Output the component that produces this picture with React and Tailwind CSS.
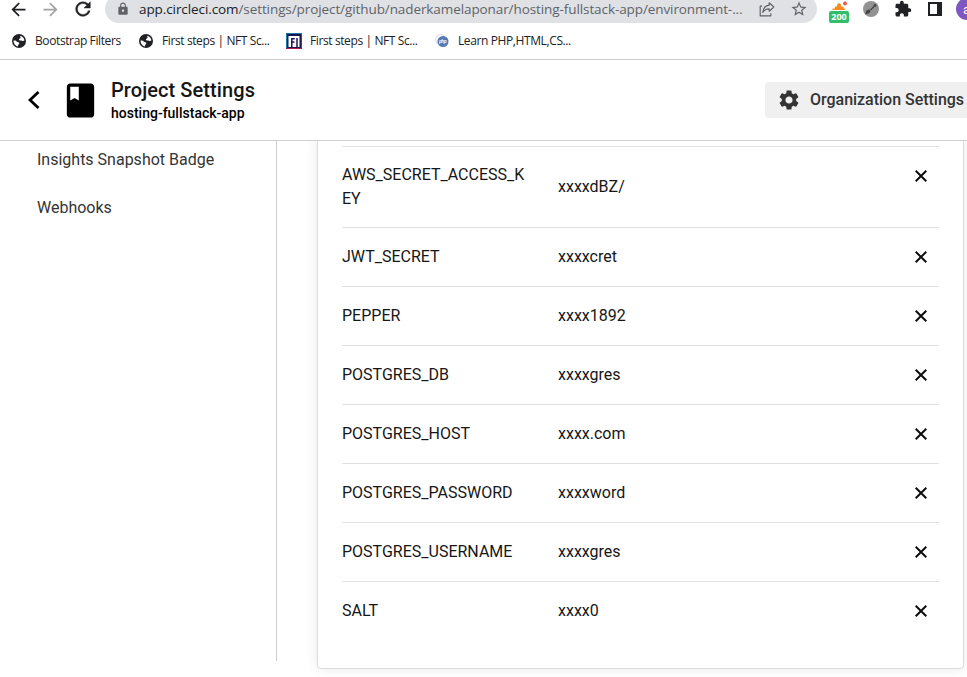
import {
  MdArrowBack,
  MdArrowForward,
  MdLock,
  MdStarBorder,
  MdExtension,
  MdClass,
  MdSettings,
} from "react-icons/md";

const variables = [
  { name: "JWT_SECRET", value: "xxxxcret" },
  { name: "PEPPER", value: "xxxx1892" },
  { name: "POSTGRES_DB", value: "xxxxgres" },
  { name: "POSTGRES_HOST", value: "xxxx.com" },
  { name: "POSTGRES_PASSWORD", value: "xxxxword" },
  { name: "POSTGRES_USERNAME", value: "xxxxgres" },
  { name: "SALT", value: "xxxx0" },
];

function CloseIcon() {
  return (
    <svg width="12" height="12" viewBox="0 0 12 12" stroke="#0d0d0d" strokeWidth="2" fill="none">
      <path d="M0.7 0.7 11.3 11.3M11.3 0.7 0.7 11.3" />
    </svg>
  );
}

function RefreshIcon() {
  return (
    <svg className="shrink-0" width="22" height="22" viewBox="0 0 24 24" fill="#202124" stroke="#202124" strokeWidth="0.4">
      <path d="M17.650 6.350A7.958 7.958 0 0 0 12 4c-4.420 0-7.990 3.580-7.990 8s3.570 8 7.990 8c3.730 0 6.840-2.550 7.730-6h-2.080A5.990 5.990 0 0 1 12 18c-3.310 0-6-2.690-6-6s2.690-6 6-6c1.660 0 3.140.690 4.220 1.780L13 11h7V4l-2.350 2.350z" />
    </svg>
  );
}

function ShareIcon() {
  return (
    <svg width="16" height="16" viewBox="0 0 16 16" fill="none" stroke="#5f6368" strokeWidth="1.2" strokeLinejoin="round">
      <path d="M3.2 5.2H1.2v9.600h10.600v-2.500" />
      <path d="M10.200 1.800 14.800 6 10.200 10.200V7.900C7.200 7.900 5.200 9 3.800 11.400 4.200 7.600 6.200 4.700 10.200 4.200Z" />
    </svg>
  );
}

function GlobeIcon() {
  return (
    <svg className="ml-[2px] mr-[2px] shrink-0" width="14" height="14" viewBox="0 0 14 14">
      <circle cx="7" cy="7" r="7" fill="#202124" />
      <path d="M1.500 6.700C2.800 6.300 4.300 6.900 5 7.700c.7.700 2 .3 2.300 1.300.2.900-.8 1.300-1.100 2.100-.2.500-.2 1-.4 1.300C3.400 11.900 1.500 9.700 1.500 6.700Z" fill="#fff" />
      <path d="M8.300 1.700C10.600 2.200 12.300 4.200 12.400 6.600c-.8.500-1.800.6-2.500.2-.7-.5-1.900.1-2.600-.5-.6-.6-.2-1.400.5-1.700.8-.3 1-.8.600-1.500-.2-.5-.3-.9-.1-1.400Z" fill="#fff" />
    </svg>
  );
}

function NftIcon() {
  return (
    <svg className="shrink-0" width="16" height="16" viewBox="0 0 16 16" fill="none">
      <rect width="16" height="16" fill="#1b1750" />
      <path d="M0.500 16V0.500H16" stroke="#1779a8" />
      <path d="M15.500 1V15.500H0" stroke="#b5184f" />
      <rect x="2.500" y="3" width="11" height="11" fill="#fff" />
      <path d="M5.800 14V5.800H8.800M5.800 9H8.500M11 5V14" stroke="#1b1464" strokeWidth="1.500" />
    </svg>
  );
}

function PhpIcon() {
  return (
    <svg className="shrink-0" width="14" height="14" viewBox="0 0 14 14" fill="none">
      <circle cx="5.500" cy="5.500" r="4.900" stroke="#c3cee3" strokeWidth="0.800" />
      <circle cx="8" cy="7.500" r="5.500" fill="#5479b5" />
      <text x="4" y="9" fontSize="4.500" fontStyle="italic" fontWeight="700" fill="#fff" fontFamily="Liberation Sans, sans-serif">php</text>
    </svg>
  );
}

function Toolbar() {
  return (
    <div className="-mt-[5px] flex h-7 shrink-0 items-center">
      <div className="ml-[8px] flex w-[97px] shrink-0 items-center gap-[11px]">
        <MdArrowBack className="size-[21px] shrink-0" color="#202124" />
        <MdArrowForward className="size-[21px] shrink-0" color="#a3a4a6" />
        <RefreshIcon />
      </div>
      <div className="flex h-7 w-[712px] shrink-0 items-center rounded-full bg-[#dfe1e5] pl-[11px] text-[#5f6368]">
        <MdLock className="size-[14px] shrink-0" />
        <span className="ml-[9px] w-[609px] shrink-0 whitespace-nowrap font-['Open_Sans',sans-serif] text-[13.5px] leading-5 tracking-[-0.09px]">
          <span className="text-[#202124]">app.circleci.com</span>/settings/project/github/naderkamelaponar/hosting-fullstack-app/environment-...
        </span>
        <span className="ml-[11px]"><ShareIcon /></span>
        <MdStarBorder className="ml-[15px] size-[18px] shrink-0" />
      </div>
      <div className="ml-[12px] flex w-5 shrink-0 flex-col items-center pt-[6px]">
        <svg width="20" height="10" viewBox="0 0 20 10">
          <path d="M3.500 7.500h2.500V5.500h2V3.500L10 2l2 1.500v2h2.500v2H16V9H3.500Z" fill="#f58a1f" />
          <circle cx="16" cy="2.500" r="1.900" fill="#ef5350" />
        </svg>
        <span className="h-3 w-5 rounded-[2px] bg-[#2fbe69] text-center font-['Open_Sans',sans-serif] text-[9px] font-bold leading-3 text-white">200</span>
      </div>
      <svg className="ml-[14px] shrink-0" width="16" height="16" viewBox="0 0 16 16">
        <circle cx="8" cy="8" r="8" fill="#929292" />
        <path d="M2 13.500 3.500 9.500 6 8.300l1.500 1.500L6.500 12ZM7 8.500 10.500 5 11.500 6 8 9.500Z" fill="#444" />
        <circle cx="12" cy="4.500" r="1.400" fill="#444" />
      </svg>
      <MdExtension className="ml-[15px] size-[18px] shrink-0" color="#202124" />
      <span className="ml-[16px] h-[14px] w-[14px] shrink-0 border-2 border-r-[5px] border-[#202124]" />
      <span className="ml-[14px] flex size-[22px] shrink-0 items-center rounded-full bg-[#7e57c2] pl-[7px] font-['Roboto',sans-serif] text-[13px] leading-none text-white">a</span>
    </div>
  );
}

function Bookmarks() {
  return (
    <div className="flex h-[37px] shrink-0 items-center whitespace-nowrap border-b border-[#cdcdcd] pl-[10px] font-['Open_Sans',sans-serif] text-[12px] leading-4 tracking-[-0.39px] text-[#202124]">
      <GlobeIcon />
      <span className="ml-[7px] w-[102px] shrink-0">Bootstrap Filters</span>
      <GlobeIcon />
      <span className="ml-[7px] w-[124px] shrink-0">First steps | NFT Sc...</span>
      <NftIcon />
      <span className="ml-[8px] w-[125px] shrink-0">First steps | NFT Sc...</span>
      <PhpIcon />
      <span className="ml-[9px]">Learn PHP,HTML,CS...</span>
    </div>
  );
}

function ProjectHeader() {
  return (
    <header className="flex h-[81px] shrink-0 items-center border-b border-[#cfcfcf]">
      <svg className="ml-[28px] shrink-0" width="12" height="18" viewBox="0 0 12 18" fill="none" stroke="#000" strokeWidth="2.800">
        <path d="M10.500 1 2 9l8.500 8" />
      </svg>
      <MdClass className="ml-[20px] size-[41px] shrink-0" color="#000" />
      <div className="ml-[10px] w-[654px] shrink-0 pt-px">
        <h1 className="text-[20px] font-medium leading-6 tracking-[0.08px] text-[#161616]">Project Settings</h1>
        <p className="text-[14px] font-medium leading-[22px] text-black">hosting-fullstack-app</p>
      </div>
      <button className="flex h-9 w-[220px] shrink-0 items-center rounded-[4px] bg-[#f0f0f0] pl-3 text-[16px] font-medium text-[#343434]">
        <MdSettings className="size-6 shrink-0" />
        <span className="ml-[9px] whitespace-nowrap tracking-[-0.02px]">Organization Settings</span>
      </button>
    </header>
  );
}

export default function App() {
  return (
    <div className="flex h-[677px] w-[967px] flex-col overflow-hidden bg-white font-['Roboto',sans-serif] text-[#161616]">
      <Toolbar />
      <Bookmarks />
      <ProjectHeader />
      <div className="flex h-[536px] shrink-0 items-start overflow-hidden">
        <nav className="flex h-[520px] w-[277px] shrink-0 flex-col gap-6 border-r border-[#cfcfcf] pl-[37px] pt-[7px] text-[16px] leading-6 text-[#343434]">
          <span>Insights Snapshot Badge</span>
          <span>Webhooks</span>
        </nav>
        <main className="-mt-1 ml-[40px] h-[532px] w-[647px] shrink-0 rounded-[4px] border border-[#dcdcdc] bg-white px-6 pt-[8px] text-[16px] leading-6 shadow-[0_0_12px_rgba(0,0,0,0.09)]">
          <div className="flex h-[81px] border-t border-[#e1e1e1]">
            <span className="w-[216px] shrink-0 pt-4">AWS_SECRET_ACCESS_K<br />EY</span>
            <span className="flex-1 pt-[28px]">xxxxdBZ/</span>
            <button className="mr-3 mt-[23px] size-3"><CloseIcon /></button>
          </div>
          {variables.map((v) => (
            <div key={v.name} className="flex h-[59px] items-center border-t border-[#e1e1e1]">
              <span className="w-[216px] shrink-0">{v.name}</span>
              <span className="flex-1">{v.value}</span>
              <button className="mr-3 size-3"><CloseIcon /></button>
            </div>
          ))}
        </main>
      </div>
    </div>
  );
}
